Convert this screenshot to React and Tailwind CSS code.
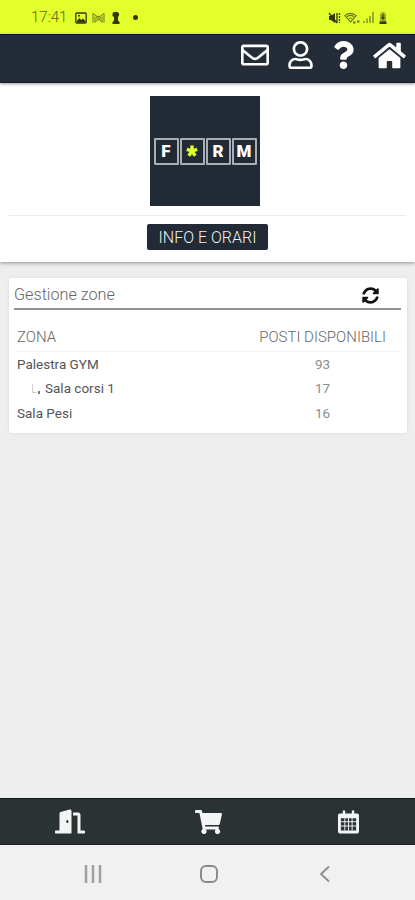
import {
  FaRegEnvelope,
  FaRegUser,
  FaQuestion,
  FaHome,
  FaSyncAlt,
  FaDoorOpen,
  FaShoppingCart
} from "react-icons/fa"

const zones = [
  { name: "Palestra GYM", seats: 93 },
  { name: "Sala corsi 1", seats: 17, child: true },
  { name: "Sala Pesi", seats: 16 }
]

function StatusBar() {
  return (
    <div className="flex h-[34px] shrink-0 items-center bg-[#e2ff2b] pt-px pl-[31px] pr-[28px] text-[#6b761d]">
      <span className="w-[37px] text-[15px] leading-none font-light whitespace-nowrap text-[#59631a]">17:41</span>
      <svg className="ml-[7px] h-[12px] w-[12px] text-[#343a10]" viewBox="0 0 12 12" fill="none" stroke="currentColor" strokeWidth="1.3">
        <rect x="0.8" y="1" width="10.4" height="10" rx="1" />
        <path d="M1.5 9.5 4.3 6l2 2 1.8-1.5 2.6 3v1H1.5z" fill="currentColor" stroke="none" />
        <circle cx="4" cy="3.8" r="1" fill="currentColor" stroke="none" />
      </svg>
      <svg className="ml-[5px] h-[12px] w-[13px]" viewBox="0 0 13 12" fill="none" stroke="currentColor" strokeWidth="1">
        <path d="M1 10.5v-9l5.5 4 5.500-4v9M3 10.5v-6M10 10.500v-6M3.200 10 6.500 7l3.300 3" />
        <circle cx="6.500" cy="6" r="1.800" />
      </svg>
      <svg className="ml-[7px] h-[12px] w-[8px] text-[#343a10]" viewBox="0 0 8 12" fill="currentColor">
        <path d="M1.500 0h4L7 1.500v2L6 5v3.500L7.500 10v2h-7v-2L2 8.500V5L.5 4V2z" />
      </svg>
      <span className="ml-[13px] h-[5px] w-[5px] rounded-full bg-[#343a10]" />

      <div className="ml-auto flex items-center gap-[3px]">
        <svg className="h-[12px] w-[13px] text-[#343a10]" viewBox="0 0 13 12" fill="none" stroke="currentColor" strokeWidth="1.300">
          <path d="M1 4h2l4-3v10L3 8H1z" fill="currentColor" stroke="none" />
          <path d="M1 1l8 10M9 1v10" />
          <path d="M11.500 1v10" strokeDasharray="2 1" />
        </svg>
        <svg className="h-[12px] w-[16px]" viewBox="0 0 16 12" fill="none" stroke="currentColor" strokeWidth="1.200">
          <path d="M.8 3.600Q6.500-1 12.200 3.600L6.500 9.800zM3 4.700q3.500-2.500 7 0M5 6.500q1.500-1 3 0" />
          <path d="M9 10.500h2.500M13 9.500h2.500" strokeWidth="1.800" />
        </svg>
        <svg className="h-[11px] w-[11px]" viewBox="0 0 11 11" stroke="currentColor" strokeWidth="1.200">
          <path d="M1 9v2M4 6.500V11M7 4v7M10 0v11" />
        </svg>
        <svg className="ml-[2px] h-[12px] w-[8px]" viewBox="0 0 8 12" fill="currentColor">
          <path d="M2.500 0h3v1.500H7V12H1V1.500h1.500z" opacity=".6" />
          <path d="M3.500 2h1v3H6L4 8 2 5h1.500zM.5 9.500h7V12h-7z" fill="#343a10" />
        </svg>
      </div>
    </div>
  )
}

function TopNav() {
  return (
    <div className="relative z-20 flex h-[49px] shrink-0 items-center border-t border-b border-t-[#10161c] border-b-[#171e2a] bg-[#242c38] pb-[7px] pl-[241px] text-white shadow-[0_1px_3px_rgba(0,0,0,0.4)]">
      <FaRegEnvelope className="h-[28px] w-[28px]" />
      <FaRegUser className="ml-[19px] h-[28px] w-[25px]" />
      <FaQuestion className="ml-[20px] h-[28px] w-[21px]" />
      <FaHome className="ml-[19px] h-[29px] w-[33px]" />
    </div>
  )
}

function LogoTile({ children }) {
  return (
    <span className="flex h-[27px] w-[25px] items-center justify-center rounded-[1px] border-2 border-[#a9adb4] text-[17px] leading-none font-black text-white">
      {children}
    </span>
  )
}

function Logo() {
  return (
    <div className="mr-[5px] flex h-[110px] w-[110px] items-center justify-center gap-px bg-[#222a36]">
      <LogoTile>F</LogoTile>
      <LogoTile>
        <svg className="h-[12px] w-[12px]" viewBox="0 0 12 12" fill="none" stroke="#e2ff2b" strokeWidth="3.400">
          <path d="M6 6V.5M6 6 .8 4.300M6 6l5.200-1.700M6 6l-3.200 4.700M6 6l3.200 4.700" />
        </svg>
      </LogoTile>
      <LogoTile>R</LogoTile>
      <LogoTile>M</LogoTile>
    </div>
  )
}

function ClubHeader() {
  return (
    <div className="relative z-10 flex h-[179px] shrink-0 flex-col items-center bg-white px-[9px] pt-[13px] shadow-[0_1px_4px_rgba(0,0,0,0.4)]">
      <Logo />
      <div className="mt-[9px] w-full border-t border-[#ececec]" />
      <button className="mt-[8px] flex h-[26px] w-[121px] items-center justify-center rounded-[2px] bg-[#222a36] pt-px text-[16px] leading-none font-light whitespace-nowrap text-[#f1f1f1]">
        INFO E ORARI
      </button>
    </div>
  )
}

function ZonesCard() {
  return (
    <div className="mt-[16px] mr-[8px] ml-[9px] h-[155px] rounded-[2px] bg-white pr-[6px] pl-[5px] shadow-[0_0_3px_rgba(0,0,0,0.1)]">
      <div className="flex h-[32px] items-center justify-between border-b-2 border-[#929292] pt-[4px] pr-[22px]">
        <h2 className="text-[16.200px] leading-none font-light text-[#666]">Gestione zone</h2>
        <FaSyncAlt className="h-[17px] w-[17px] text-[#111]" />
      </div>

      <div className="mt-[14px] ml-[3px] flex h-[28px] items-center justify-between border-b border-[#f2f2f2] pr-[15px] text-[15px] font-light text-[#666]">
        <span>ZONA</span>
        <span>POSTI DISPONIBILI</span>
      </div>
      {zones.map(zone => (
        <div key={zone.name} className="ml-[3px] flex h-[24.3px] items-center text-[13.500px] text-[#555]">
          {zone.child ? (
            <span className="flex flex-1 items-center pl-[15px]">
              <span className="mr-[5px] flex items-end">
                <span className="h-[9px] w-[5px] border-b border-l border-[#cfcfcf]" />
                <span className="-mb-px ml-px h-[3px] w-[2px] bg-[#777]" />
              </span>
              {zone.name}
            </span>
          ) : (
            <span className="flex-1">{zone.name}</span>
          )}
          <span className="mr-[15px] w-[127px] text-center text-[#8c8c8c]">{zone.seats}</span>
        </div>
      ))}
    </div>
  )
}

// calendar with a 4x3 grid of days
function CalendarIcon({ className }) {
  return (
    <svg className={className} viewBox="0 0 22 24" fill="currentColor">
      <path
        fillRule="evenodd"
        d="M5 0h2.500v3h7V0H17v3h3a2 2 0 0 1 2 2v17a2 2 0 0 1-2 2H2a2 2 0 0 1-2-2V5a2 2 0 0 1 2-2h3zM3 8v13h16V8z"
      />
      <path d="M3 11.700h16M3 16.200h16M7.200 8v13M11 8v13M14.800 8v13" stroke="currentColor" strokeWidth="1" />
    </svg>
  )
}

function TabBar() {
  return (
    <div className="mt-auto flex h-[47px] shrink-0 items-center border-t border-b border-t-[#11191b] border-b-[#151e20] bg-[#2a3234] pl-[55px] text-[#f3f5f5]">
      <FaDoorOpen className="h-[25px] w-[30px]" />
      <FaShoppingCart className="ml-[110px] h-[24px] w-[27px]" />
      <CalendarIcon className="ml-[116px] h-[24px] w-[21px]" />
    </div>
  )
}

function AndroidNav() {
  return (
    <div className="flex h-[55px] shrink-0 items-center bg-[#f1f1f1] pt-[3px] pl-[84px] text-[#8b8b8b]">
      <svg className="h-[18px] w-[18px] text-[#a0a0a0]" viewBox="0 0 18 18" stroke="currentColor" strokeWidth="2.500">
        <path d="M2 0v18M9 0v18M16 0v18" />
      </svg>
      <span className="ml-[98px] h-[18px] w-[18px] rounded-[6px] border-2 border-[#8b8b8b]" />
      <svg className="ml-[102px] h-[18px] w-[10px]" viewBox="0 0 10 18" fill="none" stroke="currentColor" strokeWidth="1.800">
        <path d="M9 1.500 1 9l8 7.500" />
      </svg>
    </div>
  )
}

function App() {
  return (
    <div className="flex h-[900px] w-[415px] flex-col overflow-hidden bg-[#eeeeee] font-['Roboto',sans-serif]">
      <StatusBar />
      <TopNav />
      <ClubHeader />
      <ZonesCard />
      <TabBar />
      <AndroidNav />
    </div>
  )
}

export default App
